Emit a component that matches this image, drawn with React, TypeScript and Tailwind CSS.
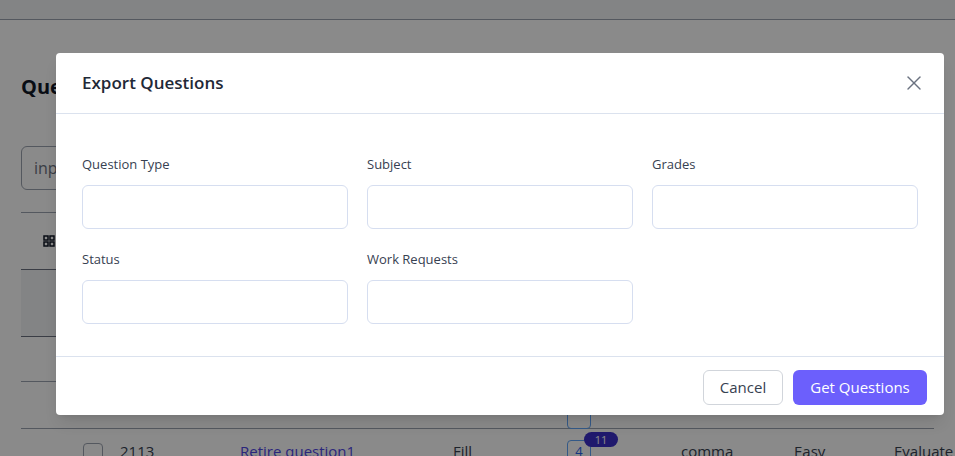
const fields = [
  { label: 'Question Type' },
  { label: 'Subject' },
  { label: 'Grades' },
  { label: 'Status' },
  { label: 'Work Requests' },
]

function BackgroundPage() {
  return (
    <div className="absolute inset-0 bg-white text-[#374151]" style={{ fontFamily: '"Open Sans", sans-serif' }}>
      <div className="h-[20px] border-b border-[#9ca3af] bg-[#f3f4f6]" />
      <div className="px-[21px]">
        <div className="pt-[52px] h-[126px] text-[20px] font-bold text-[#111827]">Questions</div>
        <div className="h-[44px] w-[300px] rounded-md border border-[#9ca3af] px-3 flex items-center text-[16px] text-[#6b7280]">input</div>
        <div className="mt-[22px] border-t border-[#9ca3af] h-[57px] flex items-center pl-[22px]">
          <svg width="12" height="12" viewBox="0 0 12 12" fill="none" stroke="#111827" strokeWidth="1.5">
            <rect x="1" y="1" width="4" height="4" />
            <rect x="7" y="1" width="4" height="4" />
            <rect x="1" y="7" width="4" height="4" />
            <rect x="7" y="7" width="4" height="4" />
          </svg>
        </div>
        <div className="h-[68px] bg-[#f3f4f6] border-y border-[#6b7280] flex items-center justify-end text-[14px] font-bold">m'</div>
        <div className="h-[45px] border-b border-[#9ca3af] flex items-center justify-end text-[14px]">pre</div>
        <div className="h-[47px] border-b border-[#9ca3af] flex items-end justify-between text-[14px]">
          <div className="ml-[546px] w-[24px] h-[22px] border border-[#60a5fa] rounded-sm mb-[-1px]" />
          <span className="self-center">at</span>
        </div>
        <div className="h-[40px] flex items-start pt-[11px] text-[15px] leading-[22px] whitespace-nowrap">
          <div className="shrink-0 ml-[62px] mt-[3px] w-[20px] h-[20px] rounded border border-[#9ca3af]" />
          <span className="shrink-0 ml-[17px] w-[120px]">2113</span>
          <span className="shrink-0 w-[213px] text-[#4f46e5]">Retire question1</span>
          <span className="shrink-0 w-[114px]">Fill</span>
          <div className="shrink-0 relative w-[114px]">
            <div className="w-[24px] h-[22px] border border-[#60a5fa] rounded-sm flex items-center justify-center text-[13px] text-[#2563eb]">4</div>
            <div className="absolute left-[17px] top-[-8px] w-[34px] h-[15px] rounded-full bg-[#3b2fc9] text-white text-[11px] leading-[15px] text-center">11</div>
          </div>
          <span className="shrink-0 w-[113px]">comma</span>
          <span className="shrink-0 w-[100px]">Easy</span>
          <span className="shrink-0">Evaluate</span>
        </div>
      </div>
    </div>
  )
}

function CloseIcon() {
  return (
    <svg width="14" height="14" viewBox="0 0 14 14" fill="none" stroke="#6b7280" strokeWidth="1.4" strokeLinecap="round">
      <path d="M1 1L13 13" />
      <path d="M13 1L1 13" />
    </svg>
  )
}

export default function App() {
  return (
    <div className="relative w-full h-screen overflow-hidden" style={{ fontFamily: '"Open Sans", sans-serif' }}>
      <BackgroundPage />
      <div className="absolute inset-0 bg-black/[0.46]">
        <div className="ml-[56px] mt-[53px] w-[888px] bg-white rounded shadow-lg">
          <div className="h-[61px] px-[26px] flex items-center justify-between border-b border-[#dbe2ee]">
            <h2 className="text-[17px] font-semibold text-[#1f2937]">Export Questions</h2>
            <button className="mr-[-3px] p-0">
              <CloseIcon />
            </button>
          </div>
          <div className="px-[26px] pt-[40px] pb-[32px] grid grid-cols-3 gap-x-[19px] gap-y-[20px]">
            {fields.map((f) => (
              <div key={f.label} className="flex flex-col">
                <label className="h-[20px] leading-[20px] text-[13px] text-[#374151]">{f.label}</label>
                <input className="mt-[11px] h-[44px] rounded-md border border-[#d6def0] outline-none px-3 text-sm" />
              </div>
            ))}
          </div>
          <div className="h-[59px] border-t border-[#dbe2ee] flex items-center justify-end gap-[10px] pr-[17px] pt-[2px]">
            <button className="h-[35px] w-[80px] rounded-md border border-[#d1d5db] bg-white text-[15px] text-[#374151]">Cancel</button>
            <button className="h-[35px] w-[134px] rounded-md bg-[#6c5ffc] text-[15px] text-white">Get Questions</button>
          </div>
        </div>
      </div>
    </div>
  )
}
